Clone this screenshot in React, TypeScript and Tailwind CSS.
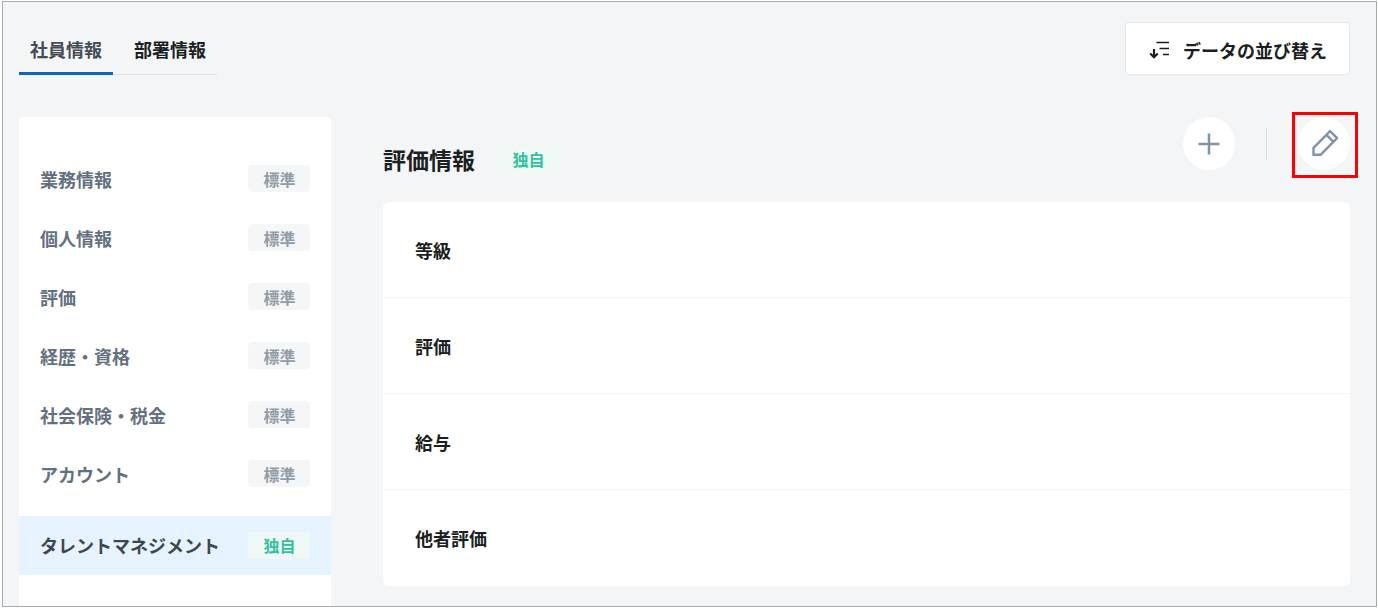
type BadgeKind = "standard" | "custom"

const menuItems = [
  "業務情報",
  "個人情報",
  "評価",
  "経歴・資格",
  "社会保険・税金",
  "アカウント",
]

const fields = ["等級", "評価", "給与", "他者評価"]

const Badge = ({ kind }: { kind: BadgeKind }) => (
  <span
    className={
      kind === "standard"
        ? "flex h-[27px] w-[62px] items-center justify-center rounded bg-[#f4f6f8] pl-px text-base leading-6 text-[#919ca6]"
        : "flex h-[27px] w-[62px] items-center justify-center rounded bg-[#eef8f5] pl-px text-base leading-6 text-[#35c09c]"
    }
  >
    {kind === "standard" ? "標準" : "独自"}
  </span>
)

const SortIcon = () => (
  <svg width="22" height="20" viewBox="0 0 22 20" fill="none" stroke="#1c1f21" strokeWidth="2" aria-hidden="true">
    <path d="M7.5 2.5h12.5M10.5 8.5h9.5M14 14.5h6" strokeWidth="1.7" />
    <path d="M5 9v8M1.2 13.5l3.8 3.8 3.8-3.8" strokeWidth="2.2" />
  </svg>
)

const PlusIcon = () => (
  <svg width="22" height="22" viewBox="0 0 22 22" fill="none" stroke="#8093a7" strokeWidth="2.5" aria-hidden="true">
    <path d="M11 .5v21M.5 11h21" />
  </svg>
)

const PencilIcon = () => (
  <svg width="30" height="30" viewBox="0 0 30 30" fill="none" stroke="#8093a7" strokeWidth="2.4" strokeLinejoin="round" aria-hidden="true">
    <path d="M4.5 18.8v7h7L28.1 9.2l-7-7z" />
    <path d="M17.4 5.9l7 7" />
  </svg>
)

export default function App() {
  return (
    <div className="flex min-h-screen bg-white pt-px pr-px pb-px pl-[2px] font-['Noto_Sans_CJK_JP',sans-serif] text-lg font-bold text-[#1c1f21]">
      <div className="flex flex-1 flex-col border border-[#a9abad] bg-[#f3f5f7] pt-5 pr-[26px] pl-4">
        <header className="flex items-start justify-between">
          <nav className="flex h-[53px]">
            <button type="button" className="border-b-3 border-[#0a66be] px-[11px] pt-1 text-[#454d54]">
              社員情報
            </button>
            <button type="button" className="border-b border-[#dde1e9] pt-0.5 pr-[11px] pl-[21px]">
              部署情報
            </button>
          </nav>
          <button
            type="button"
            className="flex h-[53px] items-center gap-3 rounded border border-[#e4e8ec] bg-white pt-0.5 pr-[22px] pl-[23px]"
          >
            <SortIcon />
            データの並び替え
          </button>
        </header>

        <div className="mt-[42px] flex flex-1 gap-[52px]">
          <aside className="w-[312px] shrink-0 rounded-t bg-white pt-[33px]">
            <ul>
              {menuItems.map((item) => (
                <li key={item}>
                  <a href="#" className="flex h-[59px] items-center justify-between px-[21px] pb-0.5 text-[#64707f]">
                    {item}
                    <Badge kind="standard" />
                  </a>
                </li>
              ))}
              <li className="mt-3">
                <a href="#" className="flex h-[59px] items-center justify-between bg-[#e6f3ff] px-[21px] pb-px text-[#3f474e]">
                  タレントマネジメント
                  <Badge kind="custom" />
                </a>
              </li>
            </ul>
          </aside>

          <main className="flex-1">
            <div className="flex h-[85px] items-start justify-between">
              <div className="flex items-center gap-[22px] pt-6">
                <h1 className="text-[23px] leading-9">評価情報</h1>
                <Badge kind="custom" />
              </div>
              <div className="flex items-center gap-[31px]">
                <button type="button" aria-label="追加" className="flex h-[53px] w-[52px] items-center justify-center rounded-full bg-white">
                  <PlusIcon />
                </button>
                <div className="h-8 w-px bg-[#d9dee7]" />
                <div className="relative">
                  <button type="button" aria-label="編集" className="flex h-[53px] w-[52px] items-center justify-center rounded-full bg-white">
                    <PencilIcon />
                  </button>
                  <div className="pointer-events-none absolute -top-[5px] -left-1.5 size-[66px] border-3 border-[#ff0000]" />
                </div>
              </div>
            </div>

            <ul className="divide-y divide-[#f3f5f7] overflow-hidden rounded-md bg-white">
              {fields.map((field) => (
                <li key={field} className="flex h-24 items-center px-8">
                  {field}
                </li>
              ))}
            </ul>
          </main>
        </div>
      </div>
    </div>
  )
}
